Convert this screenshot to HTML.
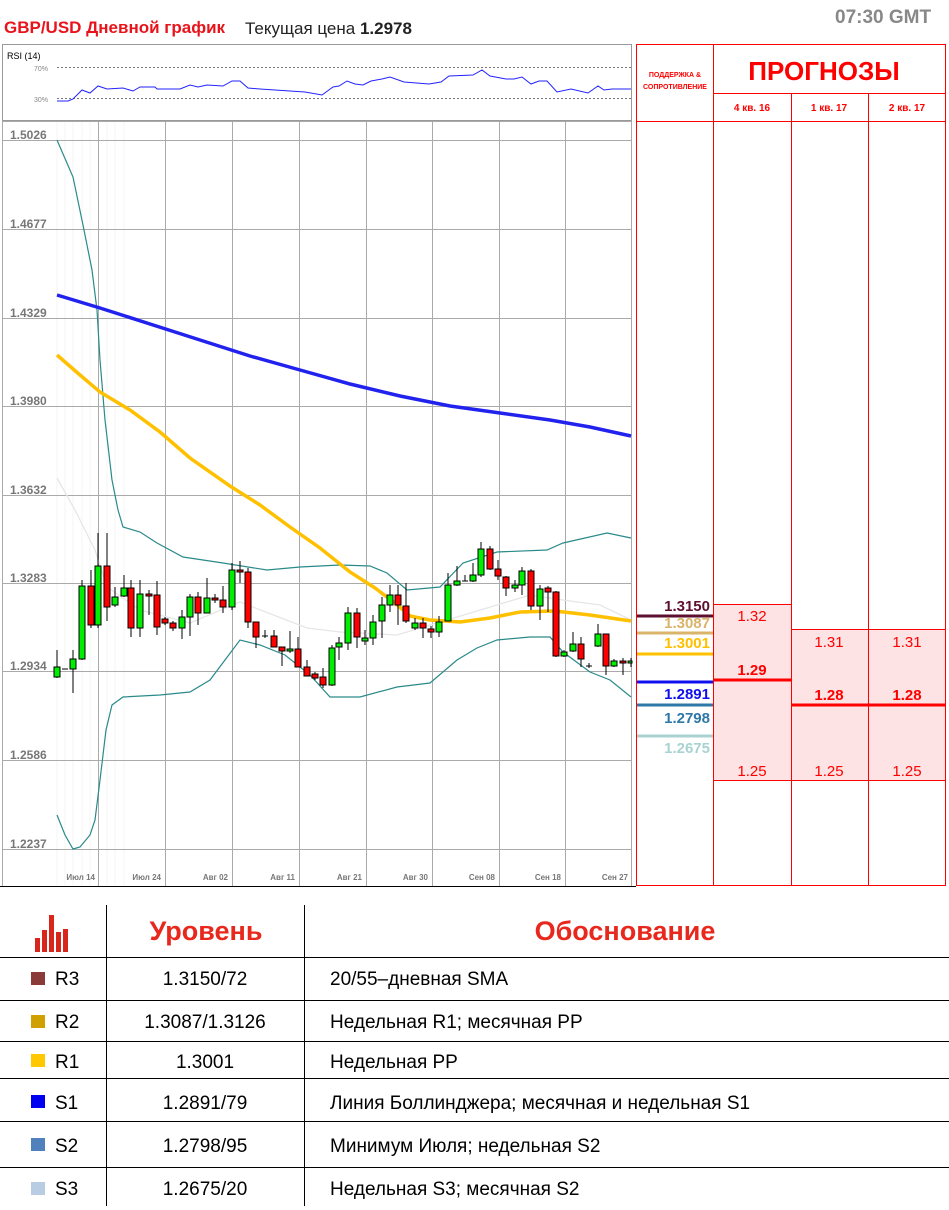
<!DOCTYPE html>
<html><head><meta charset="utf-8"><style>
body{margin:0;width:949px;height:1210px;background:#fff;font-family:"Liberation Sans",sans-serif;position:relative;overflow:hidden}
.a{position:absolute;white-space:nowrap}
</style></head><body>
<div class="a" style="left:4px;top:18px;font-size:17px;font-weight:bold;color:#e8141c">GBP/USD Дневной график</div>
<div class="a" style="left:245px;top:19px;font-size:17px;color:#222">Текущая цена <b>1.2978</b></div>
<div class="a" style="left:835px;top:7px;font-size:19px;font-weight:bold;color:#888">07:30 GMT</div>

<svg class="a" style="left:0;top:0" width="949" height="1210" xmlns="http://www.w3.org/2000/svg" font-family="Liberation Sans, sans-serif">
<!-- RSI -->
<rect x="2.5" y="44.5" width="629" height="76" fill="#fff" stroke="#999"/>
<text x="7" y="59" font-size="9" fill="#000">RSI (14)</text>
<line x1="57" y1="67.5" x2="631" y2="67.5" stroke="#777" stroke-dasharray="2,2"/>
<line x1="57" y1="98.5" x2="631" y2="98.5" stroke="#777" stroke-dasharray="2,2"/>
<text x="34" y="71" font-size="7" fill="#888">70%</text>
<text x="34" y="102" font-size="7" fill="#888">30%</text>
<polyline fill="none" stroke="#22f" stroke-width="1" points="57,101 68,101 73,99 82,90 90,93 98,86 107,89 123,88 133,91 140,87 155,87 157,89 180,89 190,85 198,87 207,85 223,86 232,81 240,81 248,88 260,89 290,91 305,92 322,95 333,87 339,86 347,81 355,84 363,85 371,81 382,79 390,77 404,82 429,84 441,82 449,76 473,75 482,70 490,76 506,79 514,79 522,77 531,84 539,81 547,81 557,92 571,89 588,93 598,86 604,90 612,89 631,89"/>
<!-- main chart frame -->
<rect x="2.5" y="121.5" width="629" height="765" fill="#fff" stroke="#aaa"/>
<g stroke="#f5f5f5" stroke-width="1">
<line x1="57" y1="122" x2="57" y2="886"/><line x1="65" y1="122" x2="65" y2="886"/><line x1="73" y1="122" x2="73" y2="886"/><line x1="82" y1="122" x2="82" y2="886"/><line x1="90" y1="122" x2="90" y2="886"/><line x1="107" y1="122" x2="107" y2="886"/><line x1="115" y1="122" x2="115" y2="886"/><line x1="124" y1="122" x2="124" y2="886"/>
</g>
<g stroke="#aaa" stroke-width="1">
<line x1="3" y1="140.5" x2="631" y2="140.5"/><line x1="3" y1="229.5" x2="631" y2="229.5"/><line x1="3" y1="318.5" x2="631" y2="318.5"/><line x1="3" y1="406.5" x2="631" y2="406.5"/><line x1="3" y1="495.5" x2="631" y2="495.5"/><line x1="3" y1="583.5" x2="631" y2="583.5"/><line x1="3" y1="671.5" x2="631" y2="671.5"/><line x1="3" y1="760.5" x2="631" y2="760.5"/><line x1="3" y1="849.5" x2="631" y2="849.5"/>
<line x1="98.5" y1="122" x2="98.5" y2="886"/><line x1="165.5" y1="122" x2="165.5" y2="886"/><line x1="232.5" y1="122" x2="232.5" y2="886"/><line x1="299.5" y1="122" x2="299.5" y2="886"/><line x1="366.5" y1="122" x2="366.5" y2="886"/><line x1="432.5" y1="122" x2="432.5" y2="886"/><line x1="499.5" y1="122" x2="499.5" y2="886"/><line x1="565.5" y1="122" x2="565.5" y2="886"/>
</g>
<line x1="0" y1="886.5" x2="636" y2="886.5" stroke="#000"/>
<g font-size="12" font-weight="bold" fill="#777">
<text x="10" y="139">1.5026</text><text x="10" y="228">1.4677</text><text x="10" y="317">1.4329</text><text x="10" y="405">1.3980</text><text x="10" y="494">1.3632</text><text x="10" y="582">1.3283</text><text x="10" y="670">1.2934</text><text x="10" y="759">1.2586</text><text x="10" y="848">1.2237</text>
</g>
<g font-size="8" font-weight="bold" fill="#777" text-anchor="end">
<text x="95" y="880">Июл 14</text><text x="161" y="880">Июл 24</text><text x="228" y="880">Авг 02</text><text x="295" y="880">Авг 11</text><text x="362" y="880">Авг 21</text><text x="428" y="880">Авг 30</text><text x="495" y="880">Сен 08</text><text x="561" y="880">Сен 18</text><text x="628" y="880">Сен 27</text>
</g>
<!-- indicators -->
<polyline fill="none" stroke="#e6e6e6" stroke-width="1.3" points="57,478 75,510 95,550 107,587 140,610 190,623 240,602 307,628 340,632 397,635 447,620 497,605 530,595 563,600 600,605 631,620"/>
<polyline fill="none" stroke="#2a8a8a" stroke-width="1.2" points="57,140 73,177 83,225 92,270 97,310 100,360 105,420 112,480 118,510 123,527 140,532 157,543 183,557 223,563 267,570 300,567 340,565 370,566 387,573 407,590 440,587 463,563 497,552 547,550 563,543 607,533 631,538"/>
<polyline fill="none" stroke="#2a8a8a" stroke-width="1.2" points="57,815 65,835 73,849 80,847 90,835 95,820 100,780 106,730 112,705 123,697 160,695 190,692 210,680 225,660 240,640 260,645 285,655 310,675 330,697 360,697 397,687 430,683 457,660 477,648 497,640 530,637 550,637 563,652 590,672 610,680 631,697"/>
<polyline fill="none" stroke="#ffc000" stroke-width="3.5" points="57,355 80,375 100,392 130,410 160,432 190,458 230,486 260,505 290,527 320,548 350,572 375,588 395,603 410,616 430,620 460,622 490,618 520,612 555,611 590,615 631,621"/>
<polyline fill="none" stroke="#2222ee" stroke-width="3.5" points="57,295 100,308 150,324 200,340 250,356 300,370 350,384 400,396 450,406 500,413 550,420 590,427 631,436"/>
<!-- candles -->
<g stroke="#000" stroke-width="1">
<line x1="57" y1="650" x2="57" y2="678"/><rect x="54" y="667" width="6" height="10" fill="#0e0"/>
<line x1="62" y1="669" x2="68" y2="669"/>
<line x1="73" y1="650" x2="73" y2="693"/><rect x="70" y="659" width="6" height="10" fill="#0e0"/>
<line x1="82" y1="580" x2="82" y2="660"/><rect x="79" y="586" width="6" height="73" fill="#0e0"/>
<line x1="91" y1="570" x2="91" y2="628"/><rect x="88" y="586" width="6" height="39" fill="#f00"/>
<line x1="98" y1="533" x2="98" y2="628"/><rect x="95" y="566" width="6" height="59" fill="#0e0"/>
<line x1="107" y1="533" x2="107" y2="621"/><rect x="104" y="566" width="6" height="41" fill="#f00"/>
<line x1="115" y1="587" x2="115" y2="607"/><rect x="112" y="597" width="6" height="8" fill="#0e0"/>
<line x1="124" y1="575" x2="124" y2="597"/><rect x="121" y="588" width="6" height="8" fill="#0e0"/>
<line x1="131" y1="580" x2="131" y2="637"/><rect x="128" y="588" width="6" height="40" fill="#f00"/>
<line x1="140" y1="580" x2="140" y2="637"/><rect x="137" y="594" width="6" height="34" fill="#0e0"/>
<line x1="149" y1="590" x2="149" y2="615"/><rect x="146" y="594" width="6" height="2" fill="#f00"/>
<line x1="157" y1="581" x2="157" y2="635"/><rect x="154" y="595" width="6" height="32" fill="#f00"/>
<line x1="165" y1="617" x2="165" y2="625"/><rect x="162" y="619" width="6" height="4" fill="#f00"/>
<line x1="173" y1="621" x2="173" y2="631"/><rect x="170" y="623" width="6" height="5" fill="#f00"/>
<line x1="182" y1="610" x2="182" y2="639"/><rect x="179" y="617" width="6" height="11" fill="#0e0"/>
<line x1="190" y1="594" x2="190" y2="636"/><rect x="187" y="597" width="6" height="20" fill="#0e0"/>
<line x1="198" y1="592" x2="198" y2="625"/><rect x="195" y="597" width="6" height="16" fill="#f00"/>
<line x1="207" y1="578" x2="207" y2="613"/><rect x="204" y="598" width="6" height="15" fill="#0e0"/>
<line x1="215" y1="594" x2="215" y2="603"/><rect x="212" y="598" width="6" height="2" fill="#f00"/>
<line x1="223" y1="586" x2="223" y2="613"/><rect x="220" y="600" width="6" height="7" fill="#f00"/>
<line x1="232" y1="563" x2="232" y2="610"/><rect x="229" y="570" width="6" height="37" fill="#0e0"/>
<line x1="240" y1="561" x2="240" y2="583"/><rect x="237" y="570" width="6" height="2" fill="#f00"/>
<line x1="248" y1="568" x2="248" y2="628"/><rect x="245" y="572" width="6" height="50" fill="#f00"/>
<line x1="256" y1="622" x2="256" y2="648"/><rect x="253" y="622" width="6" height="15" fill="#f00"/>
<line x1="262" y1="636" x2="268" y2="636"/><line x1="265" y1="630" x2="265" y2="638"/>
<line x1="274" y1="630" x2="274" y2="647"/><rect x="271" y="636" width="6" height="11" fill="#f00"/>
<line x1="282" y1="647" x2="282" y2="666"/><rect x="279" y="647" width="6" height="4" fill="#f00"/>
<line x1="290" y1="631" x2="290" y2="653"/><rect x="287" y="649" width="6" height="2" fill="#0e0"/>
<line x1="298" y1="637" x2="298" y2="667"/><rect x="295" y="649" width="6" height="18" fill="#f00"/>
<line x1="307" y1="660" x2="307" y2="676"/><rect x="304" y="667" width="6" height="9" fill="#f00"/>
<line x1="315" y1="672" x2="315" y2="680"/><rect x="312" y="674" width="6" height="4" fill="#f00"/>
<line x1="323" y1="668" x2="323" y2="688"/><rect x="320" y="677" width="6" height="8" fill="#f00"/>
<line x1="332" y1="645" x2="332" y2="686"/><rect x="329" y="648" width="6" height="37" fill="#0e0"/>
<line x1="339" y1="637" x2="339" y2="660"/><rect x="336" y="643" width="6" height="4" fill="#0e0"/>
<line x1="348" y1="607" x2="348" y2="650"/><rect x="345" y="613" width="6" height="30" fill="#0e0"/>
<line x1="357" y1="608" x2="357" y2="648"/><rect x="354" y="613" width="6" height="24" fill="#f00"/>
<line x1="365" y1="630" x2="365" y2="645"/><rect x="362" y="638" width="6" height="3" fill="#0e0"/>
<line x1="373" y1="615" x2="373" y2="645"/><rect x="370" y="622" width="6" height="16" fill="#0e0"/>
<line x1="382" y1="597" x2="382" y2="638"/><rect x="379" y="605" width="6" height="16" fill="#0e0"/>
<line x1="390" y1="585" x2="390" y2="612"/><rect x="387" y="595" width="6" height="10" fill="#0e0"/>
<line x1="398" y1="585" x2="398" y2="625"/><rect x="395" y="595" width="6" height="10" fill="#f00"/>
<line x1="406" y1="583" x2="406" y2="623"/><rect x="403" y="606" width="6" height="15" fill="#f00"/>
<line x1="415" y1="618" x2="415" y2="630"/><rect x="412" y="623" width="6" height="5" fill="#0e0"/>
<line x1="423" y1="618" x2="423" y2="638"/><rect x="420" y="623" width="6" height="5" fill="#f00"/>
<line x1="431" y1="626" x2="431" y2="638"/><rect x="428" y="629" width="6" height="3" fill="#f00"/>
<line x1="439" y1="616" x2="439" y2="637"/><rect x="436" y="622" width="6" height="10" fill="#0e0"/>
<line x1="448" y1="573" x2="448" y2="621"/><rect x="445" y="585" width="6" height="36" fill="#0e0"/>
<line x1="457" y1="566" x2="457" y2="586"/><rect x="454" y="581" width="6" height="4" fill="#0e0"/>
<line x1="462" y1="581" x2="468" y2="581"/><line x1="465" y1="575" x2="465" y2="581"/>
<line x1="473" y1="563" x2="473" y2="582"/><rect x="470" y="575" width="6" height="6" fill="#0e0"/>
<line x1="481" y1="542" x2="481" y2="577"/><rect x="478" y="549" width="6" height="26" fill="#0e0"/>
<line x1="490" y1="546" x2="490" y2="570"/><rect x="487" y="549" width="6" height="20" fill="#f00"/>
<line x1="498" y1="560" x2="498" y2="580"/><rect x="495" y="569" width="6" height="7" fill="#f00"/>
<line x1="506" y1="576" x2="506" y2="596"/><rect x="503" y="577" width="6" height="11" fill="#f00"/>
<line x1="515" y1="580" x2="515" y2="592"/><rect x="512" y="585" width="6" height="3" fill="#0e0"/>
<line x1="522" y1="567" x2="522" y2="595"/><rect x="519" y="571" width="6" height="14" fill="#0e0"/>
<line x1="531" y1="569" x2="531" y2="610"/><rect x="528" y="571" width="6" height="35" fill="#f00"/>
<line x1="540" y1="585" x2="540" y2="620"/><rect x="537" y="589" width="6" height="17" fill="#0e0"/>
<line x1="548" y1="586" x2="548" y2="612"/><rect x="545" y="588" width="6" height="4" fill="#f00"/>
<line x1="556" y1="591" x2="556" y2="657"/><rect x="553" y="592" width="6" height="64" fill="#f00"/>
<line x1="564" y1="650" x2="564" y2="657"/><rect x="561" y="652" width="6" height="4" fill="#0e0"/>
<line x1="573" y1="632" x2="573" y2="652"/><rect x="570" y="644" width="6" height="7" fill="#0e0"/>
<line x1="581" y1="637" x2="581" y2="667"/><rect x="578" y="644" width="6" height="15" fill="#f00"/>
<line x1="586" y1="666" x2="592" y2="666"/><line x1="589" y1="663" x2="589" y2="668"/>
<line x1="598" y1="624" x2="598" y2="647"/><rect x="595" y="634" width="6" height="12" fill="#0e0"/>
<line x1="606" y1="634" x2="606" y2="675"/><rect x="603" y="634" width="6" height="32" fill="#f00"/>
<line x1="614" y1="659" x2="614" y2="667"/><rect x="611" y="661" width="6" height="5" fill="#0e0"/>
<line x1="623" y1="658" x2="623" y2="675"/><rect x="620" y="661" width="6" height="2" fill="#f00"/>
<line x1="631" y1="658" x2="631" y2="667"/><rect x="628" y="661" width="4" height="2" fill="#0e0"/>
</g>
<!-- forecast table -->
<rect x="713" y="604" width="78" height="176" fill="#fde3e3"/>
<rect x="791" y="629" width="155" height="151" fill="#fde3e3"/>
<g stroke="#f00" stroke-width="1" fill="none">
<rect x="636.5" y="44.5" width="309" height="841"/>
<line x1="713.5" y1="44" x2="713.5" y2="886"/>
<line x1="791.5" y1="93" x2="791.5" y2="886"/>
<line x1="868.5" y1="93" x2="868.5" y2="886"/>
<line x1="713" y1="93.5" x2="946" y2="93.5"/>
<line x1="636" y1="121.5" x2="946" y2="121.5"/>
<line x1="713" y1="604.5" x2="791" y2="604.5"/>
<line x1="791" y1="629.5" x2="946" y2="629.5"/>
<line x1="713" y1="780.5" x2="946" y2="780.5"/>
</g>
<line x1="713" y1="680" x2="791" y2="680" stroke="#f00" stroke-width="3"/>
<line x1="791" y1="705" x2="946" y2="705" stroke="#f00" stroke-width="3"/>
<text x="824" y="80" font-size="26" font-weight="bold" fill="#f00" text-anchor="middle">ПРОГНОЗЫ</text>
<text x="675" y="77" font-size="7" font-weight="bold" fill="#f00" text-anchor="middle">ПОДДЕРЖКА &amp;</text>
<text x="675" y="89" font-size="7" font-weight="bold" fill="#f00" text-anchor="middle">СОПРОТИВЛЕНИЕ</text>
<g font-size="10" font-weight="bold" fill="#f00" text-anchor="middle">
<text x="752" y="111">4 кв. 16</text><text x="829" y="111">1 кв. 17</text><text x="907" y="111">2 кв. 17</text>
</g>
<g font-size="15" fill="#f00" text-anchor="middle">
<text x="752" y="621">1.32</text><text x="829" y="647">1.31</text><text x="907" y="647">1.31</text>
<text x="752" y="776">1.25</text><text x="829" y="776">1.25</text><text x="907" y="776">1.25</text>
</g>
<g font-size="15" font-weight="bold" fill="#f00" text-anchor="middle">
<text x="752" y="675">1.29</text><text x="829" y="700">1.28</text><text x="907" y="700">1.28</text>
</g>
<g stroke-width="3">
<line x1="637" y1="616" x2="713" y2="616" stroke="#5c0f2e"/>
<line x1="637" y1="633" x2="713" y2="633" stroke="#d9b46a"/>
<line x1="637" y1="654" x2="713" y2="654" stroke="#ffc000"/>
<line x1="637" y1="682" x2="713" y2="682" stroke="#1010ee"/>
<line x1="637" y1="705" x2="713" y2="705" stroke="#2e78a8"/>
<line x1="637" y1="736" x2="713" y2="736" stroke="#a9d2d2"/>
</g>
<g font-size="15" font-weight="bold" text-anchor="end">
<text x="710" y="611" fill="#5c0f2e">1.3150</text>
<text x="710" y="628" fill="#d9b46a">1.3087</text>
<text x="710" y="648" fill="#ffc000">1.3001</text>
<text x="710" y="699" fill="#1010ee">1.2891</text>
<text x="710" y="723" fill="#2e78a8">1.2798</text>
<text x="710" y="753" fill="#a9d2d2">1.2675</text>
</g>
<!-- bottom table -->
<g stroke="#000" stroke-width="1">
<line x1="106.5" y1="905" x2="106.5" y2="1206"/>
<line x1="304.5" y1="905" x2="304.5" y2="1206"/>
<line x1="0" y1="957.5" x2="949" y2="957.5"/>
<line x1="0" y1="1000.5" x2="949" y2="1000.5"/>
<line x1="0" y1="1041.5" x2="949" y2="1041.5"/>
<line x1="0" y1="1078.5" x2="949" y2="1078.5"/>
<line x1="0" y1="1121.5" x2="949" y2="1121.5"/>
<line x1="0" y1="1167.5" x2="949" y2="1167.5"/>
</g>
<g fill="#d9261c">
<rect x="35" y="938" width="5" height="14"/><rect x="42" y="930" width="5" height="22"/><rect x="49" y="915" width="5" height="37"/><rect x="56" y="932" width="5" height="20"/><rect x="63" y="929" width="5" height="23"/>
</g>
<text x="206" y="940" font-size="27" font-weight="bold" fill="#e8281c" text-anchor="middle">Уровень</text>
<text x="625" y="940" font-size="27" font-weight="bold" fill="#e8281c" text-anchor="middle">Обоснование</text>
<rect x="31" y="972" width="14" height="13" fill="#8b3a3a"/>
<rect x="31" y="1015" width="14" height="13" fill="#d0a000"/>
<rect x="31" y="1054" width="14" height="13" fill="#ffc800"/>
<rect x="31" y="1095" width="14" height="13" fill="#0000f0"/>
<rect x="31" y="1138" width="14" height="13" fill="#4f81bd"/>
<rect x="31" y="1182" width="14" height="13" fill="#b8cce4"/>
<g font-size="19" fill="#000">
<text x="55" y="985">R3</text><text x="55" y="1028">R2</text><text x="55" y="1068">R1</text><text x="55" y="1109">S1</text><text x="55" y="1152">S2</text><text x="55" y="1195">S3</text>
</g>
<g font-size="19" fill="#000" text-anchor="middle">
<text x="205" y="985">1.3150/72</text><text x="205" y="1028">1.3087/1.3126</text><text x="205" y="1068">1.3001</text><text x="205" y="1109">1.2891/79</text><text x="205" y="1152">1.2798/95</text><text x="205" y="1195">1.2675/20</text>
</g>
<g font-size="19" fill="#000">
<text x="330" y="985">20/55–дневная SMA</text><text x="330" y="1028">Недельная R1; месячная PP</text><text x="330" y="1068">Недельная PP</text><text x="330" y="1109">Линия Боллинджера; месячная и недельная S1</text><text x="330" y="1152">Минимум Июля; недельная S2</text><text x="330" y="1195">Недельная S3; месячная S2</text>
</g>
</svg>
</body></html>
